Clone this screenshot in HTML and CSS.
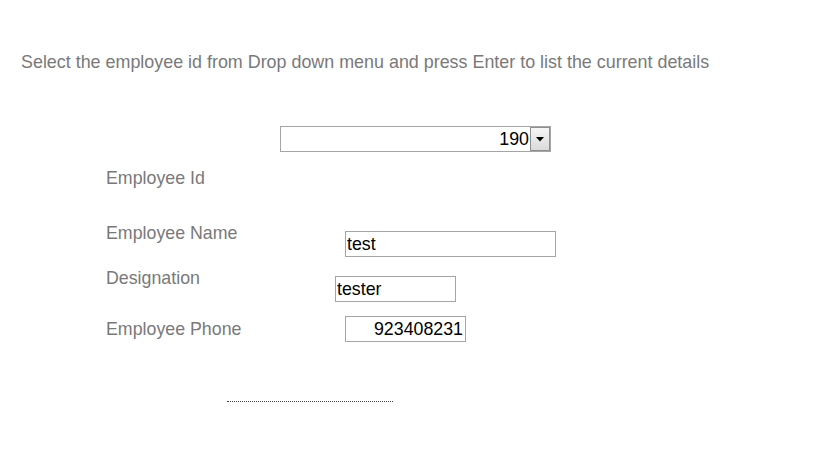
FILE: index.html
```html
<!DOCTYPE html>
<html lang="en">
  <head>
    <meta charset="UTF-8" />
    <title>Employee Details</title>
    <link rel="stylesheet" href="styles.css">
  </head>
  <body>
    <p class="intro">Select the employee id from Drop down menu and press Enter to list the current details</p>

    <div class="form">
      <div class="row row-select">
        <div class="select-box">
          <span class="select-value">190</span>
          <span class="select-arrow">
            <svg width="8" height="5" viewBox="0 0 8 5"><path d="M0 0h8L4 4.5z" fill="#000"/></svg>
          </span>
        </div>
      </div>

      <div class="row row-id">
        <label class="label">Employee Id</label>
      </div>

      <div class="row row-name">
        <label class="label">Employee Name</label>
        <input class="field field-name" type="text" value="test">
      </div>

      <div class="row row-desig">
        <label class="label">Designation</label>
        <input class="field field-desig" type="text" value="tester">
      </div>

      <div class="row row-phone">
        <label class="label">Employee Phone</label>
        <input class="field field-phone" type="text" value="923408231">
      </div>
    </div>

    <div class="dotted"></div>
  </body>
</html>
```

FILE: styles.css
```css
body {
  margin: 0;
  padding: 0;
  font-family: "Liberation Sans", Arial, sans-serif;
  font-size: 17.8px;
  color: #797979;
  background-color: #fff;
}
.intro {
  margin: 52px 0 0 21px;
  font-size: 17.9px;
  line-height: 21px;
}
.form {
  margin-left: 106px;
}
.row {
  display: flex;
  align-items: flex-start;
}
.row-select {
  margin-top: 53px;
  padding-left: 174px;
}
.select-box {
  display: flex;
  align-items: stretch;
  justify-content: flex-end;
  width: 269px;
  height: 24px;
  border: 1px solid #a5a5a5;
  background: #fff;
}
.select-value {
  color: #000;
  line-height: 24px;
  padding-right: 1px;
}
.select-arrow {
  display: flex;
  align-items: center;
  justify-content: center;
  width: 20px;
  border: 1px solid #8f8f8f;
  box-sizing: border-box;
  background: linear-gradient(#f6f6f6, #dadada);
}
.label {
  display: block;
  width: 229px;
  line-height: 20px;
}
.row-id {
  margin-top: 16px;
  height: 55px;
}
.row-name {
  height: 45px;
}
.row-desig {
  height: 49px;
}
.row-phone {
  height: 26px;
}
.row-phone .label {
  margin-top: 2px;
}
.field {
  box-sizing: border-box;
  height: 26px;
  padding: 0 1px;
  border: 1px solid #a5a5a5;
  font-family: "Liberation Sans", Arial, sans-serif;
  font-size: 17.8px;
  color: #000;
  background: #fff;
  outline: none;
}
.field-name {
  margin: 8px 0 0 10px;
  width: 211px;
}
.field-desig {
  margin-top: 8px;
  width: 121px;
}
.field-phone {
  margin-top: -1px;
  margin-left: 10px;
  width: 121px;
  text-align: right;
  padding-right: 2px;
}
.dotted {
  width: 166px;
  margin: 58px 0 0 227px;
  border-top: 1px dotted #444;
}
```
